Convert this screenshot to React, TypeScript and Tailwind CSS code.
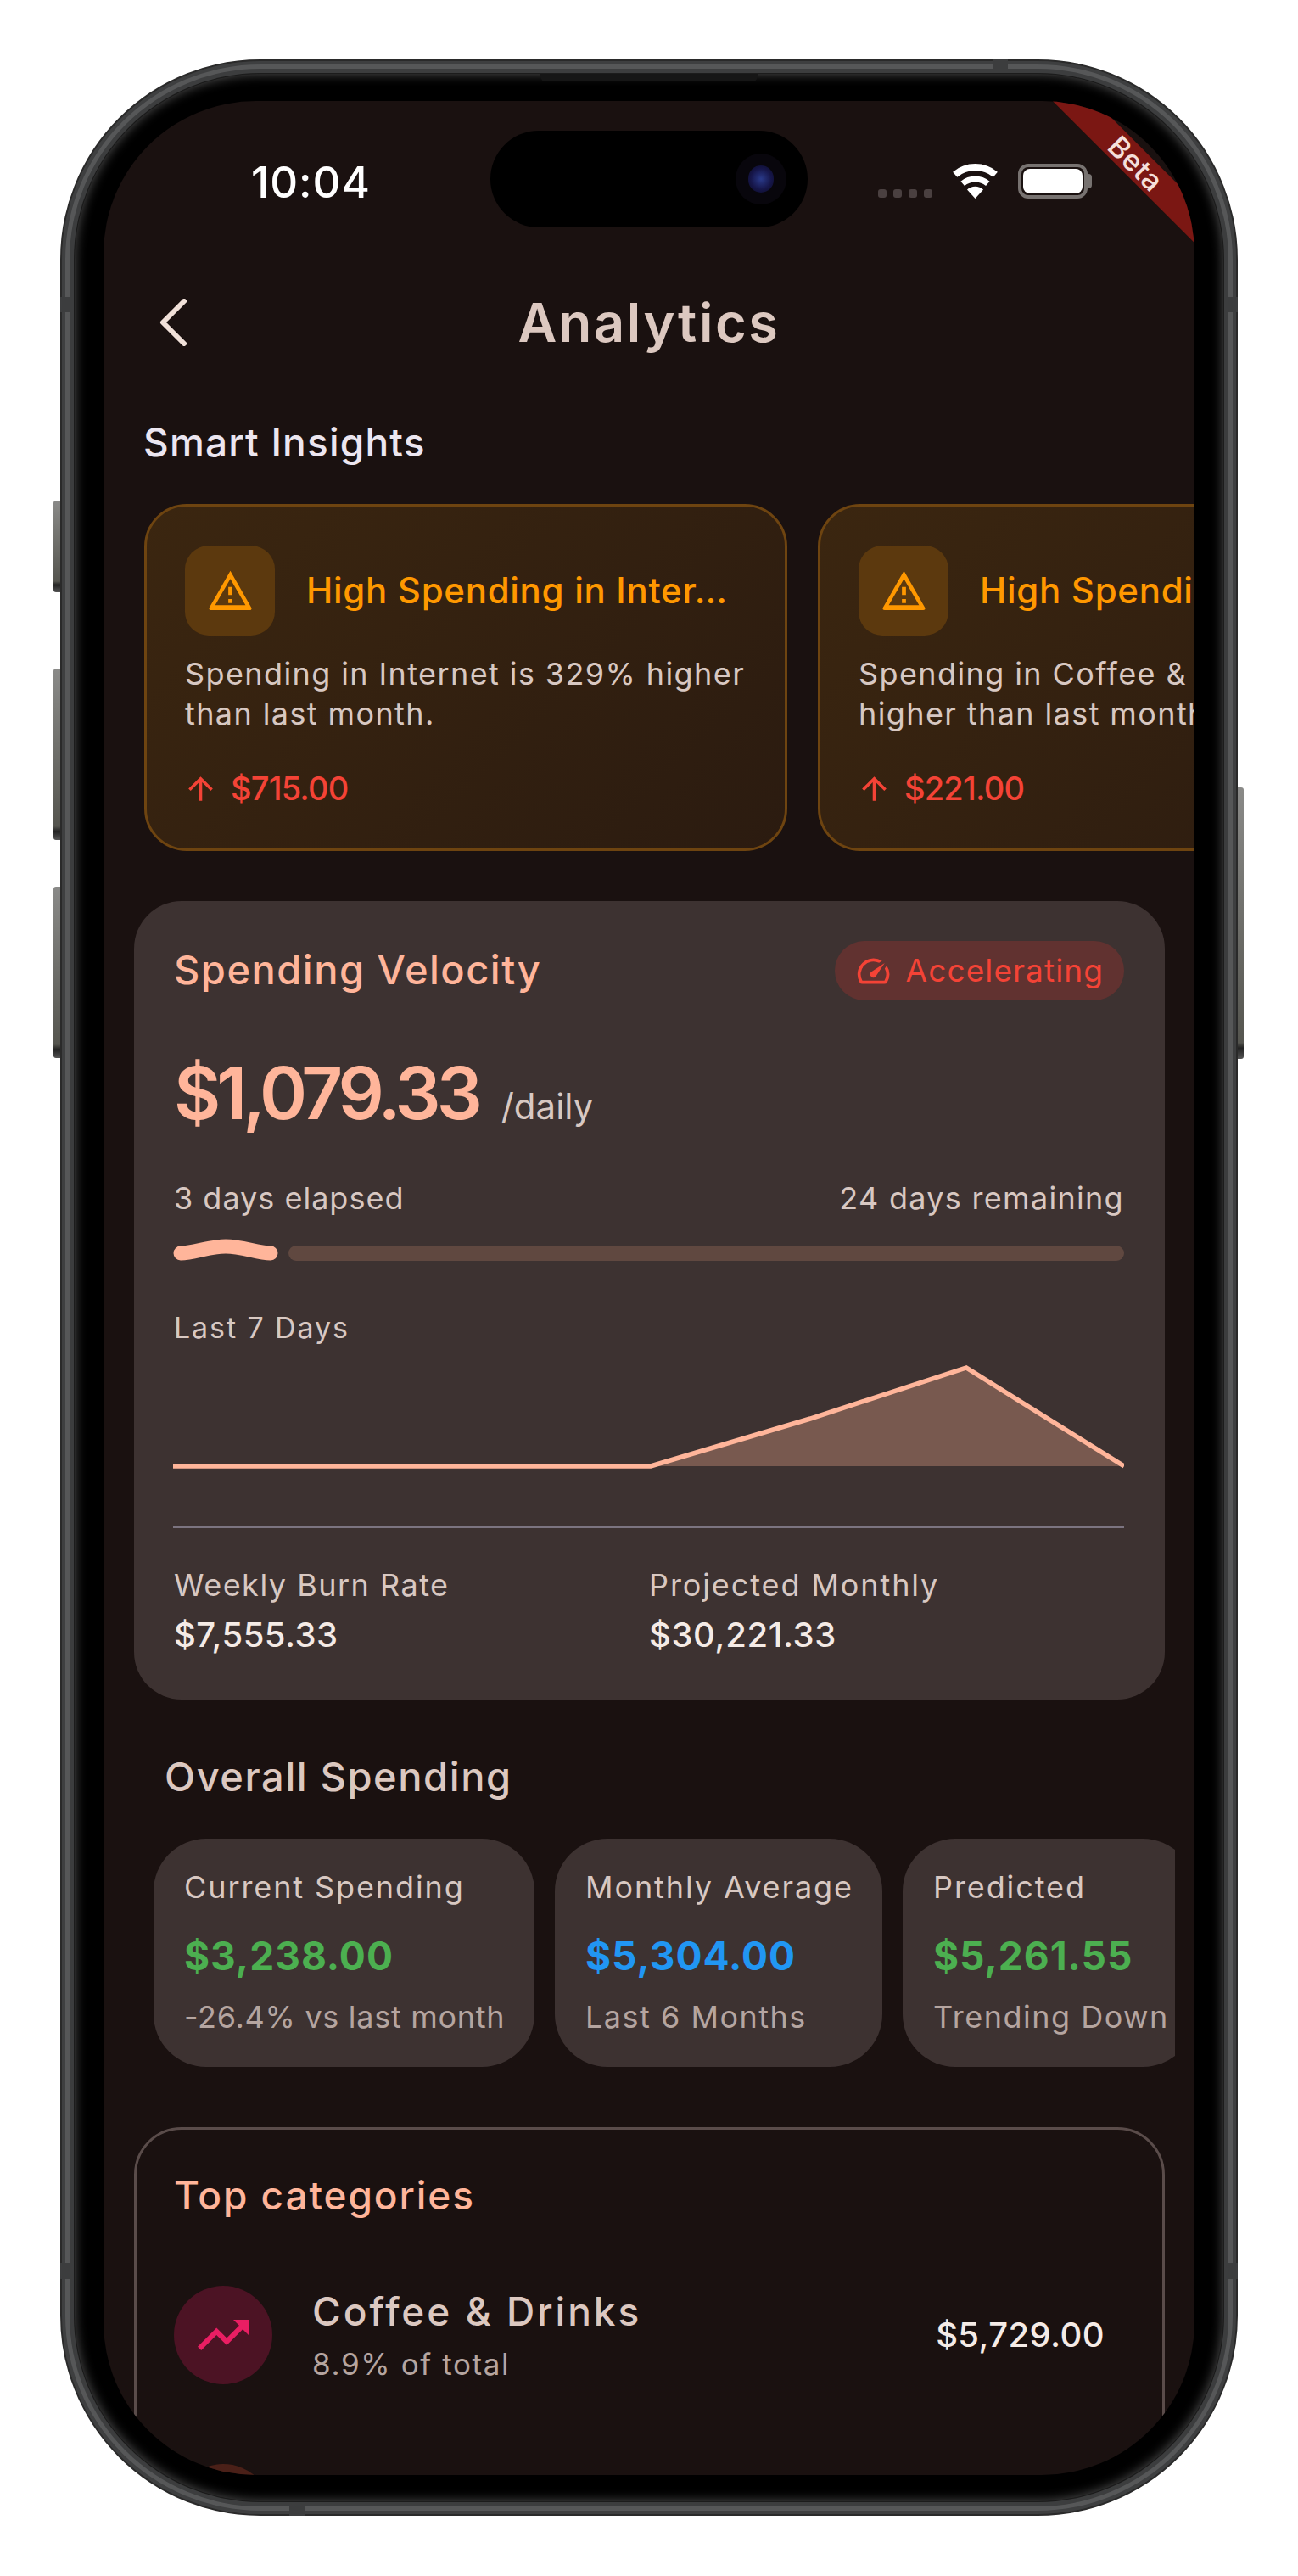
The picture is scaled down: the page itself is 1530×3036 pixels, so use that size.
import React from "react";

function Warn() {
  return (
    <svg viewBox="0 0 24 24" className="w-[57px] h-[57px]" fill="#ff9800">
      <path d="M12 5.99L19.53 19H4.47L12 5.99M12 2L1.6 20.2c-.4.7.1 1.3.8 1.3h19.2c.7 0 1.2-.6.8-1.3L12 2zm1 14h-2v2h2v-2zm0-6h-2v4h2v-4z" />
    </svg>
  );
}
function Up() {
  return (
    <svg viewBox="0 0 24 24" className="w-[43px] h-[43px] shrink-0" fill="#f44336">
      <path d="M4 12l1.41 1.41L11 7.83V20h2V7.83l5.58 5.59L20 12l-8-8-8 8z" />
    </svg>
  );
}

function Insight({ title, l1, l2, amt }: { title: string; l1: string; l2: string; amt: string }) {
  return (
    <div className="w-[758px] h-[409px] shrink-0 rounded-[50px] border-[3px] border-[#6e4410] bg-[linear-gradient(135deg,#3b2610,#2b1b10)] pl-[45px] pt-[46px]">
      <div className="flex items-center gap-[37px]">
        <div className="w-[106px] h-[106px] shrink-0 rounded-[28px] bg-[#5c390e] flex items-center justify-center">
          <Warn />
        </div>
        <div className="text-[42px] leading-[54px] font-medium text-[#ff9800] whitespace-nowrap tracking-[0.7px]">{title}</div>
      </div>
      <div className="mt-[22px] text-[36px] leading-[47px] text-[#d8c8c2] tracking-[1.4px] whitespace-nowrap">
        <div>{l1}</div>
        <div>{l2}</div>
      </div>
      <div className="mt-[41px] h-[47px] flex items-center gap-[14px] -ml-[3px] text-[38px] font-medium text-[#f44336] tracking-[-0.8px]">
        <Up />
        <span>{amt}</span>
      </div>
    </div>
  );
}

function Stat({ w, label, value, color, sub, subTrack }: { w: string; label: string; value: string; color: string; sub: string; subTrack: string }) {
  return (
    <div className={`${w} h-[269px] shrink-0 rounded-[62px] bg-[#3d3231] pl-[36px] pt-[34px] whitespace-nowrap`}>
      <div className="text-[36px] leading-[46px] text-[#d8c8c2] tracking-[1.9px]">{label}</div>
      <div className={`${color} mt-[28px] text-[46px] leading-[60px] font-bold tracking-[1px]`}>{value}</div>
      <div className={`${subTrack} mt-[19px] text-[36px] leading-[46px] text-[#b5a5a0]`}>{sub}</div>
    </div>
  );
}

export default function App() {
  return (
    <div className="w-[1530px] h-[3036px] bg-white pt-[70px] pl-[71px] font-['Inter',sans-serif] overflow-hidden">
      <div className="relative w-[1388px] h-[2895px] rounded-[236px] bg-[#3c3d3e] border-[2px] border-[#2a2a2a] shadow-[inset_0_0_0_4px_#3e3f40,inset_0_0_0_9px_#565758,inset_0_0_0_15px_#3c3d3e]">
        {/* side buttons */}
        <div className="absolute left-[-10px] top-[518px] w-[8px] h-[108px] rounded-l-[3px] bg-[linear-gradient(180deg,#8a8a88_0%,#55554f_88%,#222_92%,#555_100%)]" />
        <div className="absolute left-[-10px] top-[716px] w-[8px] h-[202px] rounded-l-[3px] bg-[linear-gradient(180deg,#8a8a88_0%,#55554f_92%,#222_95%,#555_100%)]" />
        <div className="absolute left-[-10px] top-[973px] w-[8px] h-[202px] rounded-l-[3px] bg-[linear-gradient(180deg,#8a8a88_0%,#55554f_92%,#222_95%,#555_100%)]" />
        <div className="absolute right-[-9px] top-[856px] w-[7px] h-[320px] rounded-r-[3px] bg-[linear-gradient(180deg,#8a8a88_0%,#55554f_94%,#222_96%,#555_100%)]" />
        {/* antenna bands */}
        <div className="absolute left-[1097px] top-[-2px] w-[18px] h-[17px] bg-[#3c3d3e]" />
        <div className="absolute left-[-2px] top-[278px] w-[17px] h-[18px] bg-[#3c3d3e]" />
        <div className="absolute right-[-2px] top-[278px] w-[17px] h-[18px] bg-[#3c3d3e]" />
        <div className="absolute left-[268px] bottom-[-2px] w-[19px] h-[15px] bg-[#3c3d3e]" />
        <div className="absolute left-[-2px] top-[2595px] w-[15px] h-[19px] bg-[#3c3d3e]" />
        <div className="absolute right-[-2px] top-[2595px] w-[15px] h-[19px] bg-[#3c3d3e]" />

        <div className="absolute inset-[15px] rounded-[219px] bg-black shadow-[inset_0_0_14px_#555,0_0_0_1px_#1c1c1c] pt-[32px] pl-[34px] pr-[34px] pb-[31px]">
          {/* speaker notch */}
          <div className="absolute left-[549px] top-0 w-[256px] h-[9px] rounded-b-[6px] bg-[#161616]" />
          <div className="relative w-full h-full rounded-[180px] bg-[#1a1110] overflow-hidden">
            {/* Beta ribbon */}
            <div className="absolute left-[1067px] top-[56px] w-[300px] h-[35px] rotate-45 bg-[#7b1713] flex items-center justify-center text-[34px] font-medium text-[#f5e0db] tracking-[0.5px]">
              Beta
            </div>

            {/* status bar */}
            <div className="pt-[35px] h-[149px] flex items-start">
              <div className="ml-[174px] w-[142px] mt-[30px] text-[51px] leading-[62px] font-medium text-white whitespace-nowrap tracking-[1px]">
                10:04
              </div>
              <div className="ml-[140px] w-[374px] h-[114px] rounded-[57px] bg-black flex items-center justify-end pr-[25px]">
                <div className="w-[60px] h-[60px] rounded-full bg-[#08060c] flex items-center justify-center">
                  <div className="w-[30px] h-[32px] rounded-full bg-[radial-gradient(circle,#2a3a8a_0%,#16164a_55%,#0a0a20_100%)]" />
                </div>
              </div>
              <div className="ml-[83px] mt-[69px] flex gap-[8px]">
                <div className="w-[10px] h-[10px] rounded-[3px] bg-[#4a4040]" />
                <div className="w-[10px] h-[10px] rounded-[3px] bg-[#4a4040]" />
                <div className="w-[10px] h-[10px] rounded-[3px] bg-[#4a4040]" />
                <div className="w-[10px] h-[10px] rounded-[3px] bg-[#4a4040]" />
              </div>
              <svg viewBox="0 0 55 41" className="ml-[23px] mt-[39px] w-[55px] h-[41px]" fill="none" stroke="#fff">
                <path d="M3.7 12.7A37 37 0 0 1 51.3 12.7" strokeWidth="8" />
                <path d="M12.7 23.4A23 23 0 0 1 42.3 23.4" strokeWidth="7" />
                <path d="M27.5 41L18 30.5A14 14 0 0 1 37 30.5Z" fill="#fff" stroke="none" />
              </svg>
              <div className="ml-[23px] mt-[39px] flex items-center">
                <div className="w-[82px] h-[41px] rounded-[12px] border-[4px] border-[#777270] p-[2px]">
                  <div className="w-full h-full rounded-[8px] bg-white" />
                </div>
                <div className="ml-[1px] w-[4px] h-[17px] rounded-r-[4px] bg-[#777270]" />
              </div>
            </div>

            {/* header */}
            <div className="mt-[72px] h-[80px] grid grid-cols-[1fr_auto_1fr] items-center">
              <svg viewBox="0 0 32 56" className="ml-[66px] w-[32px] h-[56px]" fill="none" stroke="#f0e0d8" strokeWidth="6" strokeLinecap="round" strokeLinejoin="round">
                <path d="M29 3L4 28L29 53" />
              </svg>
              <div className="text-[63px] leading-[80px] font-semibold text-[#dcc8c0] tracking-[2.6px]">Analytics</div>
              <div />
            </div>

            {/* smart insights */}
            <div className="mt-[71px] ml-[47px] text-[46px] leading-[60px] font-medium text-[#ece6f0] tracking-[1.2px]">Smart Insights</div>
            <div className="mt-[43px] pl-[48px] flex gap-[36px] overflow-hidden">
              <Insight title="High Spending in Inter…" l1="Spending in Internet is 329% higher" l2="than last month." amt="$715.00" />
              <Insight title="High Spending in Coffee & Drinks" l1="Spending in Coffee & Drinks is 63%" l2="higher than last month." amt="$221.00" />
            </div>

            {/* velocity */}
            <div className="mt-[59px] ml-[36px] w-[1215px] h-[941px] rounded-[56px] bg-[#3d3231] pt-[47px] pl-[47px] pr-[48px]">
              <div className="flex items-center justify-between">
                <div className="text-[47px] leading-[60px] font-medium text-[#ffb59a] tracking-[1.5px] -mt-[2px]">Spending Velocity</div>
                <div className="h-[70px] rounded-full bg-[#613230] pl-[23px] pr-[24px] flex items-center gap-[16px] text-[37px] text-[#f44336] tracking-[1.1px]">
                  <svg viewBox="0 0 24 24" className="w-[45px] h-[45px]" fill="#f44336">
                    <path d="M20.38 8.57l-1.23 1.85a8 8 0 0 1-.22 7.58H5.07A8 8 0 0 1 15.58 6.85l1.85-1.23A10 10 0 0 0 3.35 19a2 2 0 0 0 1.72 1h13.85a2 2 0 0 0 1.74-1 10 10 0 0 0-.27-10.44zm-9.79 6.84a2 2 0 0 0 2.83 0l5.66-8.49-8.49 5.66a2 2 0 0 0 0 2.83z" />
                  </svg>
                  <span>Accelerating</span>
                </div>
              </div>

              <div className="mt-[60px] h-[100px] flex items-baseline gap-[27px] leading-[100px]">
                <span className="text-[85px] font-semibold text-[#ffb59a] tracking-[-5px]">$1,079.33</span>
                <span className="text-[42px] text-[#d8c8c2]">/daily</span>
              </div>

              <div className="mt-[50px] flex justify-between text-[36px] leading-[46px] text-[#d8c8c2]">
                <span className="tracking-[1px]">3 days elapsed</span>
                <span className="tracking-[1.3px]">24 days remaining</span>
              </div>

              <div className="mt-[33px] h-[18px] flex items-center gap-[12px] -ml-[1px]">
                <svg viewBox="0 0 124 30" className="w-[124px] h-[30px] shrink-0 -mt-[12px]" fill="none" stroke="#ffb59a" strokeWidth="17" strokeLinecap="round">
                  <path d="M9 21C25 21 42 13 62 13C82 13 99 21 115 21" />
                </svg>
                <div className="flex-1 h-[18px] rounded-[9px] bg-[#604840]" />
              </div>

              <div className="mt-[57px] text-[34px] leading-[44px] text-[#d8c8c2] tracking-[1.9px]">Last 7 Days</div>

              <svg viewBox="0 0 1121 135" className="mt-[13px] w-[1121px] h-[135px] block -ml-[1px]">
                <path d="M563 128L751 72L935 12L1121 128Z" fill="#78594f" />
                <path d="M0 128L563 128L751 72L935 12L1121 128" fill="none" stroke="#ffb59a" strokeWidth="5.5" />
              </svg>

              <div className="mt-[63px] h-[3px] bg-[#7c7480] -ml-[1px]" />

              <div className="mt-[45px] grid grid-cols-2 whitespace-nowrap">
                <div>
                  <div className="text-[36px] leading-[44px] text-[#d8c8c2] tracking-[1.5px]">Weekly Burn Rate</div>
                  <div className="mt-[15px] text-[40px] leading-[44px] font-medium text-[#f5ebe6] tracking-[0.4px]">$7,555.33</div>
                </div>
                <div>
                  <div className="text-[36px] leading-[44px] text-[#d8c8c2] tracking-[1.9px]">Projected Monthly</div>
                  <div className="mt-[15px] text-[40px] leading-[44px] font-medium text-[#f5ebe6] tracking-[0.6px]">$30,221.33</div>
                </div>
              </div>
            </div>

            {/* overall */}
            <div className="mt-[61px] ml-[72px] text-[47px] leading-[60px] font-medium text-[#dcc8c0] tracking-[1.6px]">Overall Spending</div>
            <div className="mt-[43px] ml-[59px] w-[1204px] flex gap-[24px] overflow-hidden">
              <Stat w="w-[449px]" label="Current Spending" value="$3,238.00" color="text-[#4caf50]" sub="-26.4% vs last month" subTrack="tracking-[0.7px]" />
              <Stat w="w-[386px]" label="Monthly Average" value="$5,304.00" color="text-[#2196f3]" sub="Last 6 Months" subTrack="tracking-[1.5px]" />
              <Stat w="w-[345px]" label="Predicted" value="$5,261.55" color="text-[#4caf50]" sub="Trending Down" subTrack="tracking-[1.5px]" />
            </div>

            {/* top categories */}
            <div className="mt-[71px] ml-[36px] w-[1215px] h-[700px] rounded-[56px] border-[3px] border-[#5a4c4a] pl-[44px] pr-[68px] pt-[47px]">
              <div className="text-[46px] leading-[60px] font-medium text-[#ffb59a] tracking-[1.9px]">Top categories</div>
              <div className="mt-[77px] flex items-center">
                <div className="w-[116px] h-[116px] shrink-0 rounded-full bg-[#4c1324] flex items-center justify-center">
                  <svg viewBox="0 0 24 24" className="w-[72px] h-[72px]" fill="#e91e63">
                    <path d="M16 6l2.29 2.29-4.88 4.88-4-4L2 16.59 3.41 18l6-6 4 4 6.3-6.29L22 12V6z" />
                  </svg>
                </div>
                <div className="ml-[47px] -mt-[2px]">
                  <div className="text-[46px] leading-[60px] font-medium text-[#dcc8c0] tracking-[3px]">Coffee &amp; Drinks</div>
                  <div className="mt-[9px] text-[35px] leading-[46px] text-[#b5a5a0] tracking-[1.6px]">8.9% of total</div>
                </div>
                <div className="ml-auto text-[40px] font-medium text-[#f5ebe6] tracking-[0.4px]">$5,729.00</div>
              </div>
              <div className="mt-[94px] w-[116px] h-[116px] rounded-full bg-[#4a2018]" />
            </div>
          </div>
        </div>
      </div>
    </div>
  );
}
